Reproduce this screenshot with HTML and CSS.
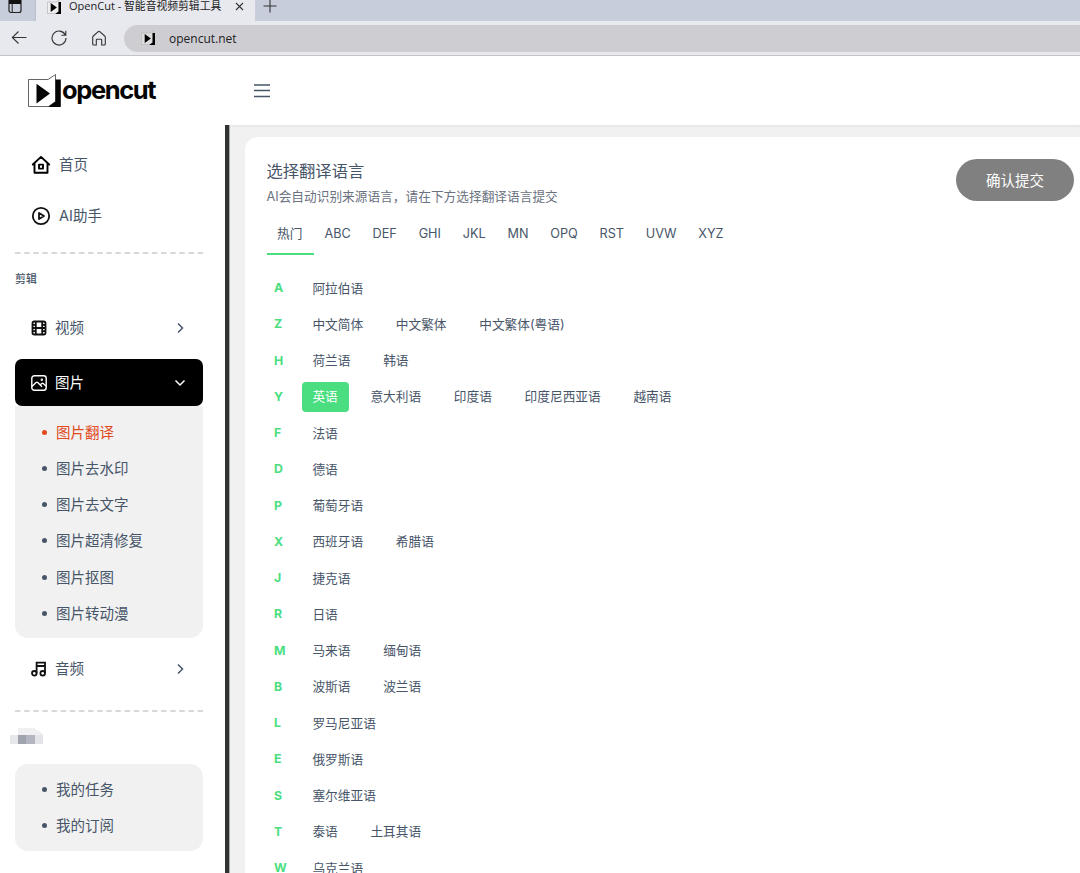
FILE: index.html
```html
<!DOCTYPE html>
<html lang="zh-CN">
<head>
    <meta charset="UTF-8">
    <meta name="viewport" content="width=device-width, initial-scale=1.0">
    <title>OpenCut - 智能音视频剪辑工具</title>
    <link rel="stylesheet" href="styles.css">
</head>
<body>
    <!-- 浏览器栏 -->
    <div class="browser">
        <div class="tabs-bar">
            <div class="tab-actions">
                <svg width="14" height="14" viewBox="0 0 14 14"><rect x="1" y="-1" width="12" height="13.500" rx="2" fill="none" stroke="#222" stroke-width="1.200"/><path d="M1 0h12v4H1z" fill="#111"/><path d="M4.200 4v8.500" stroke="#222"/></svg>
            </div>
            <div class="browser-tab">
                <svg class="favicon" width="14" height="14" viewBox="0 0 34 34"><path d="M1 5h20l8-4v28l-8 4H1z" fill="#eee" stroke="#bbb" stroke-width="2"/><path d="M9 7l15 11L9 29zM28 5h6v29H20l8-6z" fill="#000"/></svg>
                <span class="tab-title">OpenCut - <span class="tab-cn">智能音视频剪辑工具</span></span>
                <svg class="tab-close" width="9" height="9" viewBox="0 0 9 9"><path d="M1 1l7 7M8 1L1 8" stroke="#333" stroke-width="1.100"/></svg>
            </div>
            <svg class="tab-new" width="14" height="14" viewBox="0 0 14 14"><path d="M7 0v12.500M.5 6h13" stroke="#333" stroke-width="1.100"/></svg>
        </div>
        <div class="toolbar">
            <svg width="16" height="16" viewBox="0 0 16 16"><path d="M15.500 7.500H1.500M7.500 1.500L1.300 7.500l6.200 6" fill="none" stroke="#333" stroke-width="1.100"/></svg>
            <svg width="16" height="16" viewBox="0 0 16 16"><path d="M14.300 5A7 7 0 1 0 15 8M14.800 .8v4.400h-4.400" fill="none" stroke="#333" stroke-width="1.100"/></svg>
            <svg width="16" height="16" viewBox="0 0 16 16"><path d="M1.700 7.200Q1.700 6.500 2.300 6L7.200 1.700q.8-.6 1.600 0L13.700 6q.6.500.6 1.200V14q0 1-1 1h-2.600V10q0-.8-.8-.8H6.100q-.8 0-.8.8v5H2.700q-1 0-1-1z" fill="none" stroke="#333" stroke-width="1.100"/></svg>
            <div class="address">
                <svg width="14" height="14" viewBox="0 0 34 34"><path d="M1 5h20l8-4v28l-8 4H1z" fill="#ddd" stroke="#bbb" stroke-width="2"/><path d="M9 7l15 11L9 29zM28 5h6v29H20l8-6z" fill="#000"/></svg>
                <span>opencut.net</span>
            </div>
        </div>
    </div>

    <div class="app">
        <aside class="sidebar">
            <a class="logo">
                <svg width="34" height="36" viewBox="0 0 34 36">
                    <path d="M1.500 6.500H21L28.500 1.500V28.500L21.500 33.500H1.500z" fill="#fff" stroke="#555" stroke-width=".9"/>
                    <path d="M9.500 10.800L23 20.500L9.500 30.500zM28.500 6.500h5.300v27.500H21l7.500-5.500z" fill="#050505"/>
                </svg>
                <span class="logo-text">opencut</span>
            </a>
            <nav class="menu">
                <a class="menu-item top">
                    <svg width="20" height="20" viewBox="0 0 20 20" fill="none" stroke="#000" stroke-width="1.900" stroke-linejoin="round" stroke-linecap="round"><path d="M1.800 9.500L10 1.900l8.200 7.600M3.500 8.500v9.300h13V8.500"/><rect x="8" y="9.600" width="4" height="4"/></svg>
                    <span>首页</span>
                </a>
                <a class="menu-item top">
                    <svg width="20" height="20" viewBox="0 0 20 20" fill="none" stroke="#111" stroke-width="1.800" stroke-linejoin="round"><circle cx="10" cy="10" r="8.200"/><path d="M8 6.900l5 3.100-5 3.100z"/></svg>
                    <span>AI助手</span>
                </a>
            </nav>
            <svg class="divider" width="188" height="2"><path d="M0 1H188" stroke="#ccc" stroke-width="1.700" stroke-dasharray="5.500 3.630"/></svg>
            <h6 class="menu-title">剪辑</h6>
            <a class="menu-item video">
                <svg width="16" height="16" viewBox="0 0 16 16" fill="none" stroke="#111" stroke-width="1.800"><rect x="1.500" y="1.500" width="13" height="13" rx="1.800"/><path d="M4.800 1.500v13M11.200 1.500v13M4.800 8h6.400M1.300 4.800h3.400M1.300 8h3.400M1.300 11.200h3.400M11.300 4.800h3.400M11.300 8h3.400M11.300 11.200h3.400"/></svg>
                <span>视频</span>
                <svg class="arrow" width="12" height="12" viewBox="0 0 12 12"><path d="M4 1.500L8.500 6 4 10.500"/></svg>
            </a>
            <a class="menu-item active">
                <svg width="16" height="16" viewBox="0 0 16 16" fill="none" stroke="#fff" stroke-width="1.400"><rect x=".8" y=".8" width="14.400" height="14.400" rx="2.500"/><path d="M1 11.500L5 7.500q1-.8 2 .2l4 4M9 10l1.500-1.300q1-.8 2 0L15 11"/><circle cx="10.800" cy="4.700" r=".5"/></svg>
                <span>图片</span>
                <svg class="arrow" width="12" height="12" viewBox="0 0 12 12"><path d="M1.500 3.500L6 8 10.500 3.500"/></svg>
            </a>
            <ul class="submenu">
                <li class="current"><span>图片翻译</span></li>
                <li><span>图片去水印</span></li>
                <li><span>图片去文字</span></li>
                <li><span>图片超清修复</span></li>
                <li><span>图片抠图</span></li>
                <li><span>图片转动漫</span></li>
            </ul>
            <a class="menu-item audio">
                <svg width="16" height="16" viewBox="0 0 16 16" fill="none" stroke="#111" stroke-width="1.800"><circle cx="3.300" cy="12.300" r="2.300"/><circle cx="11.700" cy="12.300" r="2.300"/><path d="M5.600 12.300V1.700H14v10.600M5.600 5H14"/></svg>
                <span>音频</span>
                <svg class="arrow" width="12" height="12" viewBox="0 0 12 12"><path d="M4 1.500L8.500 6 4 10.500"/></svg>
            </a>
            <svg class="divider last" width="188" height="2"><path d="M0 1H188" stroke="#ccc" stroke-width="1.700" stroke-dasharray="5.500 3.630"/></svg>
            <!-- 打码的用户名 -->
            <svg class="masked" width="33" height="16" shape-rendering="crispEdges"><path d="M8 0h16l5 3 4 4H8z" fill="#f0f0f2"/><path d="M0 7h8v9H0z" fill="#e6e7ea"/><path d="M8 7h8v9H8z" fill="#a0a4ae"/><path d="M16 7h9v9h-9z" fill="#b3b6bf"/><path d="M25 7h8v9h-8z" fill="#e3e5e9"/></svg>
            <ul class="submenu mine">
                <li><span>我的任务</span></li>
                <li><span>我的订阅</span></li>
            </ul>
        </aside>

        <div class="main">
            <header class="header">
                <svg width="18" height="14" viewBox="0 0 18 14"><path d="M1 1h16M1 6.500h16M1 12.500h16" stroke="#475569" stroke-width="1.500"/></svg>
            </header>
            <div class="content">
                <div class="card">
                    <div class="card-head">
                        <div>
                            <h1>选择翻译语言</h1>
                            <p>AI会自动识别来源语言，请在下方选择翻译语言提交</p>
                        </div>
                        <button class="submit">确认提交</button>
                    </div>
                    <div class="letters">
                        <span class="on">热门</span><span>ABC</span><span>DEF</span><span>GHI</span><span>JKL</span><span>MN</span><span>OPQ</span><span>RST</span><span>UVW</span><span>XYZ</span>
                    </div>
                    <div class="langs">
                        <div class="row"><b>A</b><span>阿拉伯语</span></div>
                        <div class="row"><b>Z</b><span>中文简体</span><span>中文繁体</span><span>中文繁体(粤语)</span></div>
                        <div class="row"><b>H</b><span>荷兰语</span><span>韩语</span></div>
                        <div class="row"><b>Y</b><span class="selected">英语</span><span>意大利语</span><span>印度语</span><span>印度尼西亚语</span><span>越南语</span></div>
                        <div class="row"><b>F</b><span>法语</span></div>
                        <div class="row"><b>D</b><span>德语</span></div>
                        <div class="row"><b>P</b><span>葡萄牙语</span></div>
                        <div class="row"><b>X</b><span>西班牙语</span><span>希腊语</span></div>
                        <div class="row"><b>J</b><span>捷克语</span></div>
                        <div class="row"><b>R</b><span>日语</span></div>
                        <div class="row"><b>M</b><span>马来语</span><span>缅甸语</span></div>
                        <div class="row"><b>B</b><span>波斯语</span><span>波兰语</span></div>
                        <div class="row"><b>L</b><span>罗马尼亚语</span></div>
                        <div class="row"><b>E</b><span>俄罗斯语</span></div>
                        <div class="row"><b>S</b><span>塞尔维亚语</span></div>
                        <div class="row"><b>T</b><span>泰语</span><span>土耳其语</span></div>
                        <div class="row"><b>W</b><span>乌克兰语</span></div>
                    </div>
                </div>
            </div>
        </div>
    </div>
</body>
</html>
```
FILE: styles.css
```css
* {
    margin: 0;
    padding: 0;
    box-sizing: border-box;
}

body {
    height: 100vh;
    overflow: hidden;
    display: flex;
    flex-direction: column;
    font-family: Inter, "Noto Sans CJK SC", sans-serif;
    color: #475569;
    background: #fff;
}

svg {
    display: block;
    flex-shrink: 0;
}

ul {
    list-style: none;
}

/* 浏览器栏 */
.browser {
    height: 56px;
    flex-shrink: 0;
    background: #e8e9ee;
    border-bottom: 1px solid #c3c4c8;
    font-family: "Open Sans", "Noto Sans CJK SC", sans-serif;
    color: #222;
}

.tabs-bar {
    height: 21px;
    display: flex;
    background: #c8cddb;
}

.tab-actions {
    width: 36px;
    padding-left: 8px;
    border-right: 1px solid #b9bdca;
    border-radius: 0 0 4px 0;
}

.browser-tab {
    width: 219px;
    display: flex;
    align-items: flex-start;
    padding-left: 11px;
    background: #e8e9ee;
    font-size: 11px;
    line-height: 14px;
}

.tab-title {
    width: 165px;
    margin-left: 8px;
    margin-top: -1px;
    white-space: nowrap;
}

.tab-cn {
    font-size: 10.8px;
}

.tab-close {
    margin: 2px 0 0 1px;
}

.tab-new {
    margin: 0 0 0 8px;
}

.toolbar {
    height: 34px;
    display: flex;
    align-items: center;
    gap: 24px;
    padding-left: 11px;
}

.address {
    flex: 1;
    height: 27px;
    display: flex;
    align-items: center;
    gap: 14px;
    margin-left: -7px;
    padding-left: 17px;
    border-radius: 14px 0 0 14px;
    background: #cecdd2;
    font-size: 12px;
}

.app {
    flex: 1;
    display: flex;
    min-height: 0;
}

/* 左侧菜单 */
.sidebar {
    width: 230px;
    padding-left: 15px;
    overflow: hidden;
    font-size: 14.5px;
}

.logo {
    display: flex;
    height: 83px;
    padding: 17px 0 0 12px;
}

.logo-text {
    margin-left: 1px;
    font-family: Inter, sans-serif;
    font-size: 25.5px;
    line-height: 34px;
    font-weight: 700;
    letter-spacing: -1.4px;
    color: #050505;
}

.menu-item {
    width: 188px;
    height: 47px;
    display: flex;
    align-items: center;
    gap: 8px;
    padding: 0 17px 0 16px;
    border-radius: 7px;
}

.menu-item span,
.submenu span {
    padding-bottom: 2px;
}

.menu-item.top {
    height: 51px;
}

.menu-item .arrow {
    margin-left: auto;
    fill: none;
    stroke: #475569;
    stroke-width: 1.5;
}

.menu-item.active {
    margin-top: 8px;
    background: #000;
    color: #fff;
}

.menu-item.active .arrow {
    stroke: #fff;
}

.divider {
    margin-top: 11px;
}

.menu-title {
    height: 50px;
    font-size: 10.9px;
    line-height: 50px;
    font-weight: 500;
}

.submenu {
    width: 188px;
    height: 232px;
    padding-top: 8px;
    border-radius: 0 0 13px 13px;
    background: #f1f1f1;
}

.submenu li {
    height: 36.25px;
    display: flex;
    align-items: center;
    padding-left: 27px;
}

.submenu li::before {
    content: "";
    width: 5px;
    height: 5px;
    margin-right: 9px;
    border-radius: 50%;
    background: #475569;
}

.submenu .current {
    color: #e1491e;
}

.submenu .current::before {
    background: #e1491e;
}

.menu-item.audio {
    margin-top: 7px;
}

.divider.last {
    margin-top: 18px;
}

.masked {
    margin: 16px 0 20px -5px;
}

.submenu.mine {
    height: 87px;
    padding-top: 7px;
    border-radius: 13px;
}

/* 右侧内容 */
.main {
    flex: 1;
    display: flex;
    flex-direction: column;
    margin-left: -5px;
}

.header {
    height: 69px;
    flex-shrink: 0;
    padding: 28px 0 0 28px;
    background: #fff;
}

.content {
    flex: 1;
    min-height: 0;
    padding: 12px 0 0 16px;
    border-left: 4px solid #2f3333;
    box-shadow: inset 1px 0 0 #a9a9a9, inset 0 2px 1px #e8e8e8;
    background: #f1f1f1;
}

.card {
    height: 100%;
    overflow: hidden;
    padding: 22px 6px 0 21.5px;
    border-radius: 13px 0 0 0;
    background: #fff;
}

.card-head {
    display: flex;
    justify-content: space-between;
}

.card-head h1 {
    font-size: 16.3px;
    line-height: 25px;
    font-weight: 400;
}

.card-head p {
    font-size: 12.7px;
    line-height: 26px;
    color: #6b7280;
}

.submit {
    width: 118px;
    height: 42px;
    padding-bottom: 1px;
    margin-top: -0.5px;
    border: 0;
    border-radius: 21px;
    background: #808080;
    color: #fff;
    font-family: inherit;
    font-size: 14.5px;
}

.letters {
    display: flex;
    height: 45px;
    font-size: 12.7px;
    line-height: 47px;
}

.letters span {
    height: 45px;
    padding: 0 10.9px;
    border-bottom: 2px solid transparent;
}

.letters .on {
    padding: 0 11.2px 0 10.5px;
    border-color: #4ade80;
}

.langs {
    margin-top: 15.5px;
    font-size: 12.7px;
}

.row {
    height: 36.25px;
    display: flex;
    align-items: center;
}

.row b {
    width: 35px;
    padding: 0 0 2px 7.5px;
    color: #4ade80;
    font-size: 12.3px;
}

.row span {
    height: 30px;
    line-height: 30px;
    margin-right: 10.9px;
    padding: 0 10.9px;
    border-radius: 4px;
}

.row .selected {
    background: #4ade80;
    color: #fff;
}
```
